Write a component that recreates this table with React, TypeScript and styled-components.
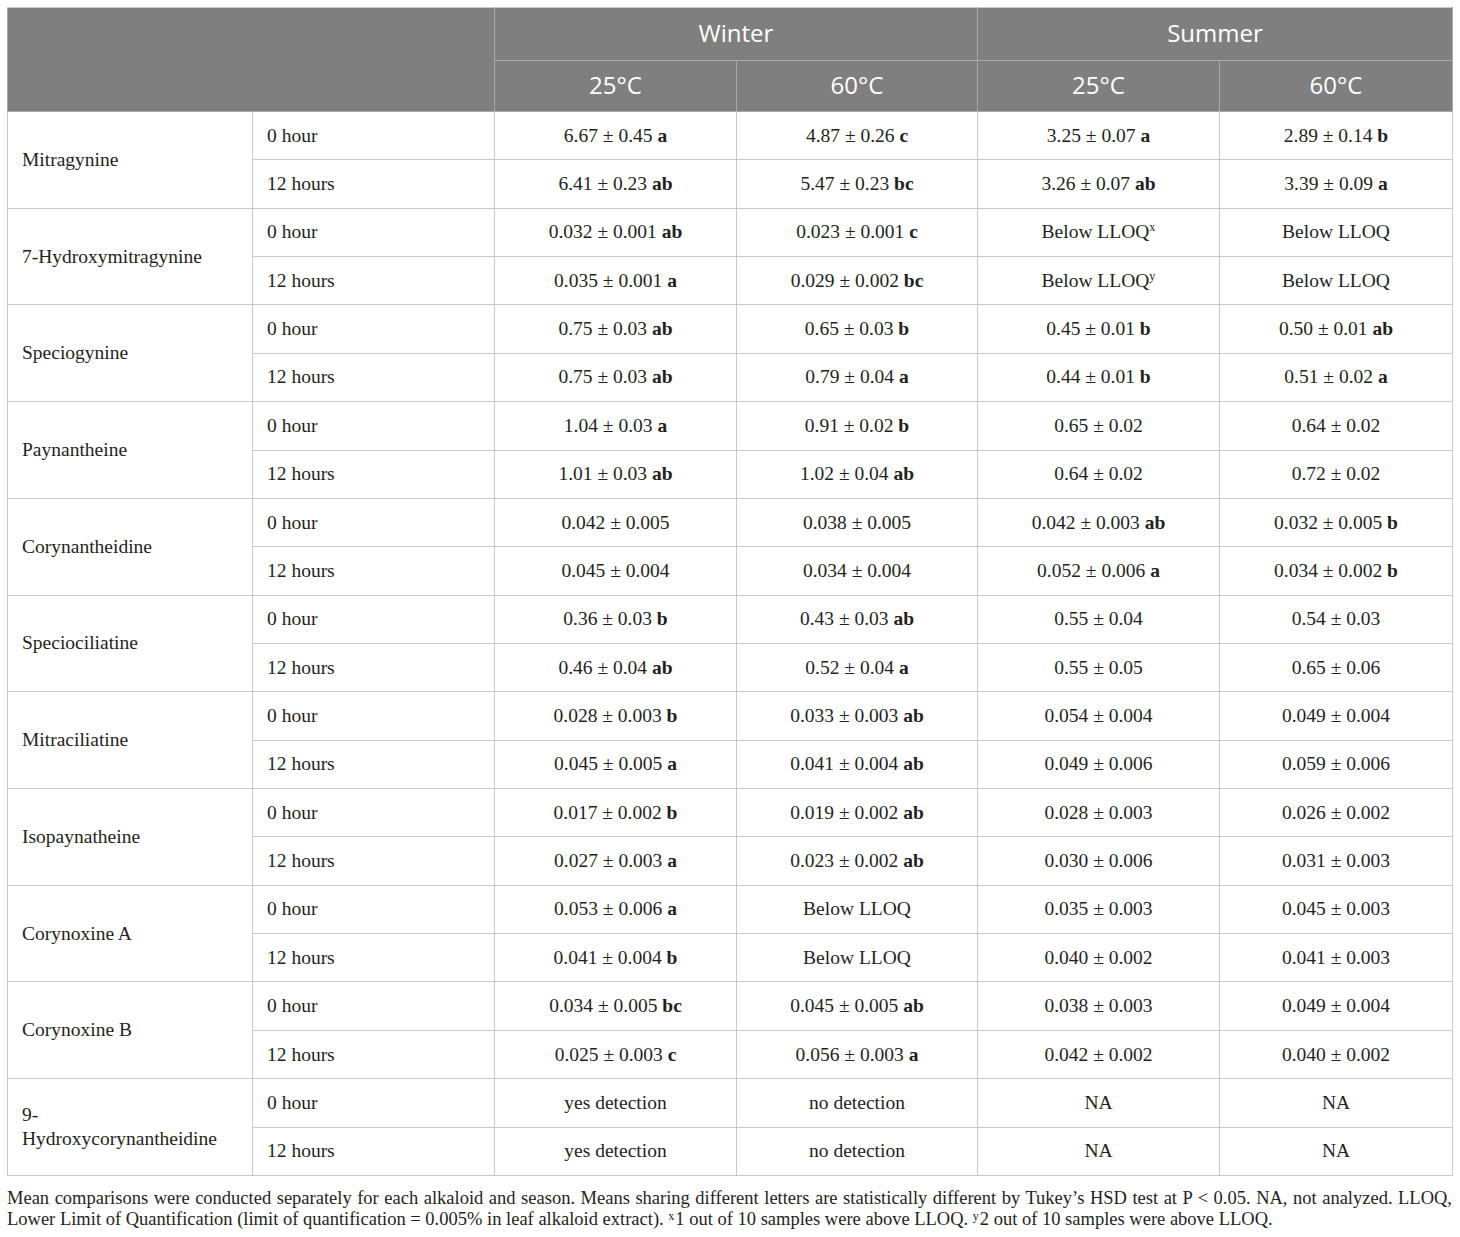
import styled, { createGlobalStyle } from 'styled-components'

const GlobalStyle = createGlobalStyle`
  html, body {
    margin: 0;
    padding: 0;
    background: #ffffff;
  }
`

type Cell = string

interface Alkaloid {
  name: string
  rows: [Cell[], Cell[]]
}

// "value|letters" -> letters in bold, "text^x" -> superscript mark
const alkaloids: Alkaloid[] = [
  {
    name: 'Mitragynine',
    rows: [
      ['6.67 ± 0.45|a', '4.87 ± 0.26|c', '3.25 ± 0.07|a', '2.89 ± 0.14|b'],
      ['6.41 ± 0.23|ab', '5.47 ± 0.23|bc', '3.26 ± 0.07|ab', '3.39 ± 0.09|a'],
    ],
  },
  {
    name: '7-Hydroxymitragynine',
    rows: [
      ['0.032 ± 0.001|ab', '0.023 ± 0.001|c', 'Below LLOQ^x', 'Below LLOQ'],
      ['0.035 ± 0.001|a', '0.029 ± 0.002|bc', 'Below LLOQ^y', 'Below LLOQ'],
    ],
  },
  {
    name: 'Speciogynine',
    rows: [
      ['0.75 ± 0.03|ab', '0.65 ± 0.03|b', '0.45 ± 0.01|b', '0.50 ± 0.01|ab'],
      ['0.75 ± 0.03|ab', '0.79 ± 0.04|a', '0.44 ± 0.01|b', '0.51 ± 0.02|a'],
    ],
  },
  {
    name: 'Paynantheine',
    rows: [
      ['1.04 ± 0.03|a', '0.91 ± 0.02|b', '0.65 ± 0.02', '0.64 ± 0.02'],
      ['1.01 ± 0.03|ab', '1.02 ± 0.04|ab', '0.64 ± 0.02', '0.72 ± 0.02'],
    ],
  },
  {
    name: 'Corynantheidine',
    rows: [
      ['0.042 ± 0.005', '0.038 ± 0.005', '0.042 ± 0.003|ab', '0.032 ± 0.005|b'],
      ['0.045 ± 0.004', '0.034 ± 0.004', '0.052 ± 0.006|a', '0.034 ± 0.002|b'],
    ],
  },
  {
    name: 'Speciociliatine',
    rows: [
      ['0.36 ± 0.03|b', '0.43 ± 0.03|ab', '0.55 ± 0.04', '0.54 ± 0.03'],
      ['0.46 ± 0.04|ab', '0.52 ± 0.04|a', '0.55 ± 0.05', '0.65 ± 0.06'],
    ],
  },
  {
    name: 'Mitraciliatine',
    rows: [
      ['0.028 ± 0.003|b', '0.033 ± 0.003|ab', '0.054 ± 0.004', '0.049 ± 0.004'],
      ['0.045 ± 0.005|a', '0.041 ± 0.004|ab', '0.049 ± 0.006', '0.059 ± 0.006'],
    ],
  },
  {
    name: 'Isopaynatheine',
    rows: [
      ['0.017 ± 0.002|b', '0.019 ± 0.002|ab', '0.028 ± 0.003', '0.026 ± 0.002'],
      ['0.027 ± 0.003|a', '0.023 ± 0.002|ab', '0.030 ± 0.006', '0.031 ± 0.003'],
    ],
  },
  {
    name: 'Corynoxine A',
    rows: [
      ['0.053 ± 0.006|a', 'Below LLOQ', '0.035 ± 0.003', '0.045 ± 0.003'],
      ['0.041 ± 0.004|b', 'Below LLOQ', '0.040 ± 0.002', '0.041 ± 0.003'],
    ],
  },
  {
    name: 'Corynoxine B',
    rows: [
      ['0.034 ± 0.005|bc', '0.045 ± 0.005|ab', '0.038 ± 0.003', '0.049 ± 0.004'],
      ['0.025 ± 0.003|c', '0.056 ± 0.003|a', '0.042 ± 0.002', '0.040 ± 0.002'],
    ],
  },
  {
    name: '9-\nHydroxycorynantheidine',
    rows: [
      ['yes detection', 'no detection', 'NA', 'NA'],
      ['yes detection', 'no detection', 'NA', 'NA'],
    ],
  },
]

const columnWidths = [245, 242, 242, 241, 242, 233]

const renderValue = (cell: Cell) => {
  const [text, letters] = cell.split('|')
  const [base, mark] = text.split('^')
  return (
    <>
      {base}
      {mark && <Sup>{mark}</Sup>}
      {letters && (
        <>
          {' '}
          <Letters>{letters}</Letters>
        </>
      )}
    </>
  )
}

const renderName = (name: string) =>
  name.split('\n').map((part, i) => (
    <span key={part}>
      {i > 0 && <br />}
      {part}
    </span>
  ))

export default function App() {
  return (
    <Page>
      <GlobalStyle />
      <Table>
        <colgroup>
          {columnWidths.map((w, i) => (
            <col key={i} style={{ width: w }} />
          ))}
        </colgroup>
        <thead>
          <HeadRow $height={53}>
            <HeadCell colSpan={2} rowSpan={2} />
            <HeadCell colSpan={2}>{`Winter`}</HeadCell>
            <HeadCell colSpan={2}>{`Summer`}</HeadCell>
          </HeadRow>
          <HeadRow $height={51}>
            <HeadCell>{`25°C`}</HeadCell>
            <HeadCell>{`60°C`}</HeadCell>
            <HeadCell>{`25°C`}</HeadCell>
            <HeadCell>{`60°C`}</HeadCell>
          </HeadRow>
        </thead>
        <tbody>
          {alkaloids.map((alkaloid) =>
            alkaloid.rows.map((values, rowIndex) => (
              <BodyRow key={`${alkaloid.name}-${rowIndex}`}>
                {rowIndex === 0 && <NameCell rowSpan={2}>{renderName(alkaloid.name)}</NameCell>}
                <TimeCell>{rowIndex === 0 ? `0 hour` : `12 hours`}</TimeCell>
                {values.map((value, i) => (
                  <ValueCell key={i}>{renderValue(value)}</ValueCell>
                ))}
              </BodyRow>
            ))
          )}
        </tbody>
      </Table>
      <Footnote>
        <FootLine $justify>
          Mean comparisons were conducted separately for each alkaloid and season. Means sharing different
          letters are statistically different by Tukey’s HSD test at P &lt; 0.05. NA, not analyzed. LLOQ,
        </FootLine>
        <FootLine>
          {`Lower Limit of Quantification (limit of quantification = 0.005% in leaf alkaloid extract). `}
          <NoteMark>x</NoteMark>
          {`1 out of 10 samples were above LLOQ. `}
          <NoteMark>y</NoteMark>
          {`2 out of 10 samples were above LLOQ.`}
        </FootLine>
      </Footnote>
    </Page>
  )
}

const Page = styled.div`
  padding: 7px 7px 0 7px;
  width: 1445px;
  font-family: 'Liberation Serif', 'Times New Roman', serif;
  color: #231f20;
`

const Table = styled.table`
  width: 1445px;
  table-layout: fixed;
  border-collapse: collapse;
  border: 1px solid #c9c9c9;
`

const HeadRow = styled.tr<{ $height: number }>`
  height: ${(p) => p.$height}px;
`

const HeadCell = styled.th`
  background: #7f7f7f;
  color: #ffffff;
  font-family: 'Open Sans', 'Noto Sans', sans-serif;
  font-weight: 400;
  font-size: 24px;
  line-height: 28px;
  text-align: center;
  vertical-align: middle;
  padding: 0 0 3px 0;
  border: 1px solid #a9a9a9;
  border-top-color: #c9c9c9;
`

const BodyRow = styled.tr`
  height: 48.36px;
`

const BodyCell = styled.td`
  border: 1px solid #c9c9c9;
  font-size: 19.5px;
  line-height: 24px;
  vertical-align: middle;
  padding: 0 14px;
`

const NameCell = styled(BodyCell)`
  text-align: left;
`

const TimeCell = styled(BodyCell)`
  text-align: left;
`

const ValueCell = styled(BodyCell)`
  text-align: center;
  white-space: nowrap;
`

const Letters = styled.b`
  font-weight: 700;
`

const Sup = styled.sup`
  font-size: 0.62em;
  line-height: 0;
  vertical-align: 0.6em;
`

const NoteMark = styled.span`
  display: inline-block;
  font-size: 12px;
  line-height: 12px;
  margin: 0 1px 0 0;
  vertical-align: 0.45em;
`

const Footnote = styled.div`
  margin: 12px 0 0 0;
  font-size: 18.5px;
  line-height: 21.5px;
`

const FootLine = styled.div<{ $justify?: boolean }>`
  white-space: nowrap;
  text-align: ${(p) => (p.$justify ? 'justify' : 'left')};
  text-align-last: ${(p) => (p.$justify ? 'justify' : 'left')};
`
